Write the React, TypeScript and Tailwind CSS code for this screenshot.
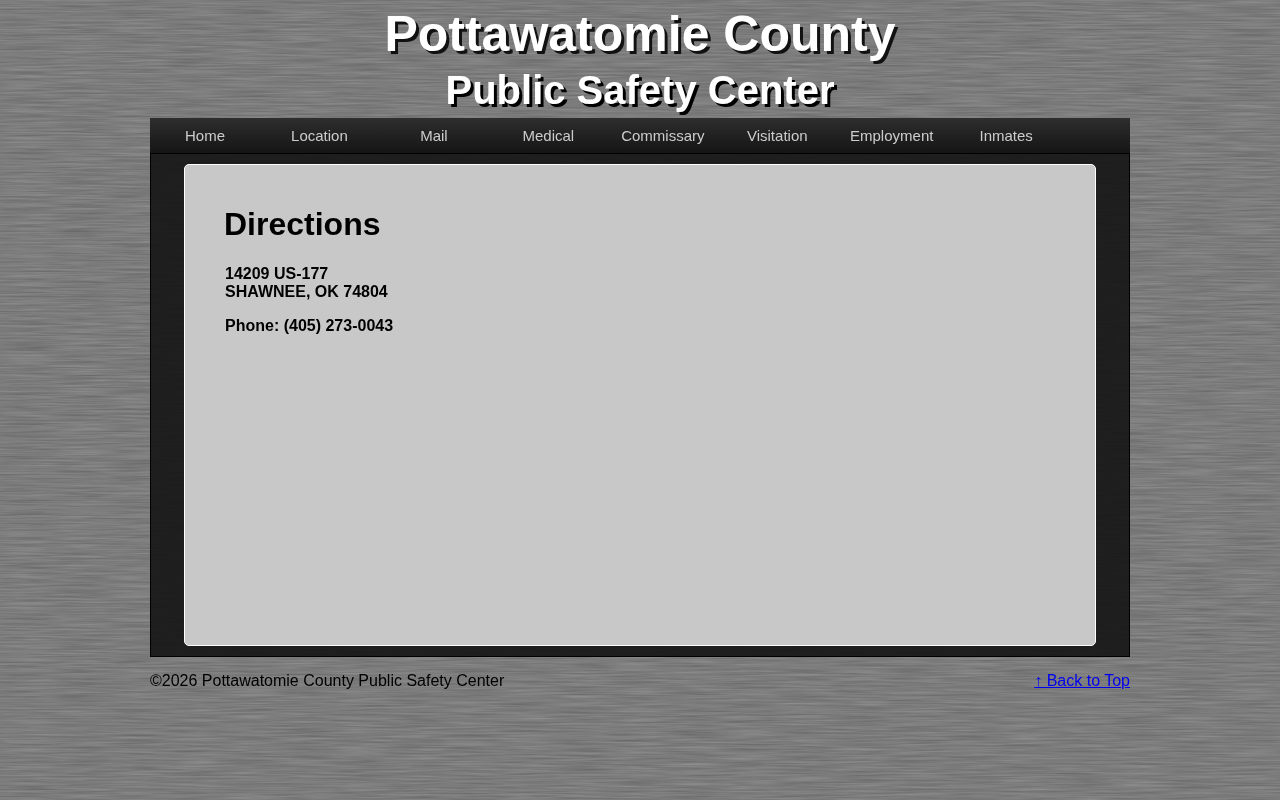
const navItems = [
  'Home',
  'Location',
  'Mail',
  'Medical',
  'Commissary',
  'Visitation',
  'Employment',
  'Inmates',
];

// Brushed steel page background
function BrushedMetal() {
  return (
    <svg className="fixed inset-0 -z-10 h-full w-full" aria-hidden="true">
      <filter id="brushed" x="0" y="0" width="100%" height="100%" colorInterpolationFilters="sRGB">
        <feTurbulence type="fractalNoise" baseFrequency="0.018 0.55" numOctaves="3" seed="8" />
        <feColorMatrix
          type="matrix"
          values="0.17 0 0 0 0.4
                  0.17 0 0 0 0.4
                  0.17 0 0 0 0.4
                  0 0 0 0 1"
        />
      </filter>
      <rect width="100%" height="100%" filter="url(#brushed)" />
    </svg>
  );
}

function Header() {
  return (
    <header className="pt-1 pb-[2px] text-center font-bold text-white">
      <h1 className="text-[50px] leading-[60px] [text-shadow:3px_3px_0_#111]">Pottawatomie County</h1>
      <h2 className="text-[40px] leading-[52px] [text-shadow:3px_3px_0_#000]">Public Safety Center</h2>
    </header>
  );
}

function NavBar() {
  return (
    <nav className="border-b border-black bg-linear-to-b from-[#2e2e2e] to-[#151515]">
      <ul className="h-[35px]">
        {navItems.map((item) => (
          <li key={item} className="inline">
            <a href="#" className="inline-block w-[110px] text-center text-[15px] leading-[35px] text-[#ccc] hover:text-white">
              {item}
            </a>{' '}
          </li>
        ))}
      </ul>
    </nav>
  );
}

export default function App() {
  return (
    <div id="top" className="font-['Liberation_Sans',Arial,sans-serif] text-base text-black">
      <BrushedMetal />
      <div className="mx-auto max-w-[980px]">
        <Header />
        <NavBar />

        <main className="border-x border-b border-black bg-[#141414]/90 px-[33px] py-[10px]">
          <section className="min-h-[482px] rounded-[5px] border border-white bg-[#c8c8c8] px-[39px] pt-[41px]">
            <h1 className="text-[32px] leading-[37px] font-bold">Directions</h1>
            <address className="mt-[22px] pl-px leading-[18px] font-bold not-italic">
              <p>
                14209 US-177
                <br />
                SHAWNEE, OK 74804
              </p>
              <p className="mt-4">Phone: (405) 273-0043</p>
            </address>
          </section>
        </main>

        <footer className="flex justify-between pt-[15px] leading-[18px]">
          <p>©2026 Pottawatomie County Public Safety Center</p>
          <a href="#top" className="text-[#0000ee] underline">
            ↑ Back to Top
          </a>
        </footer>
      </div>
    </div>
  );
}
